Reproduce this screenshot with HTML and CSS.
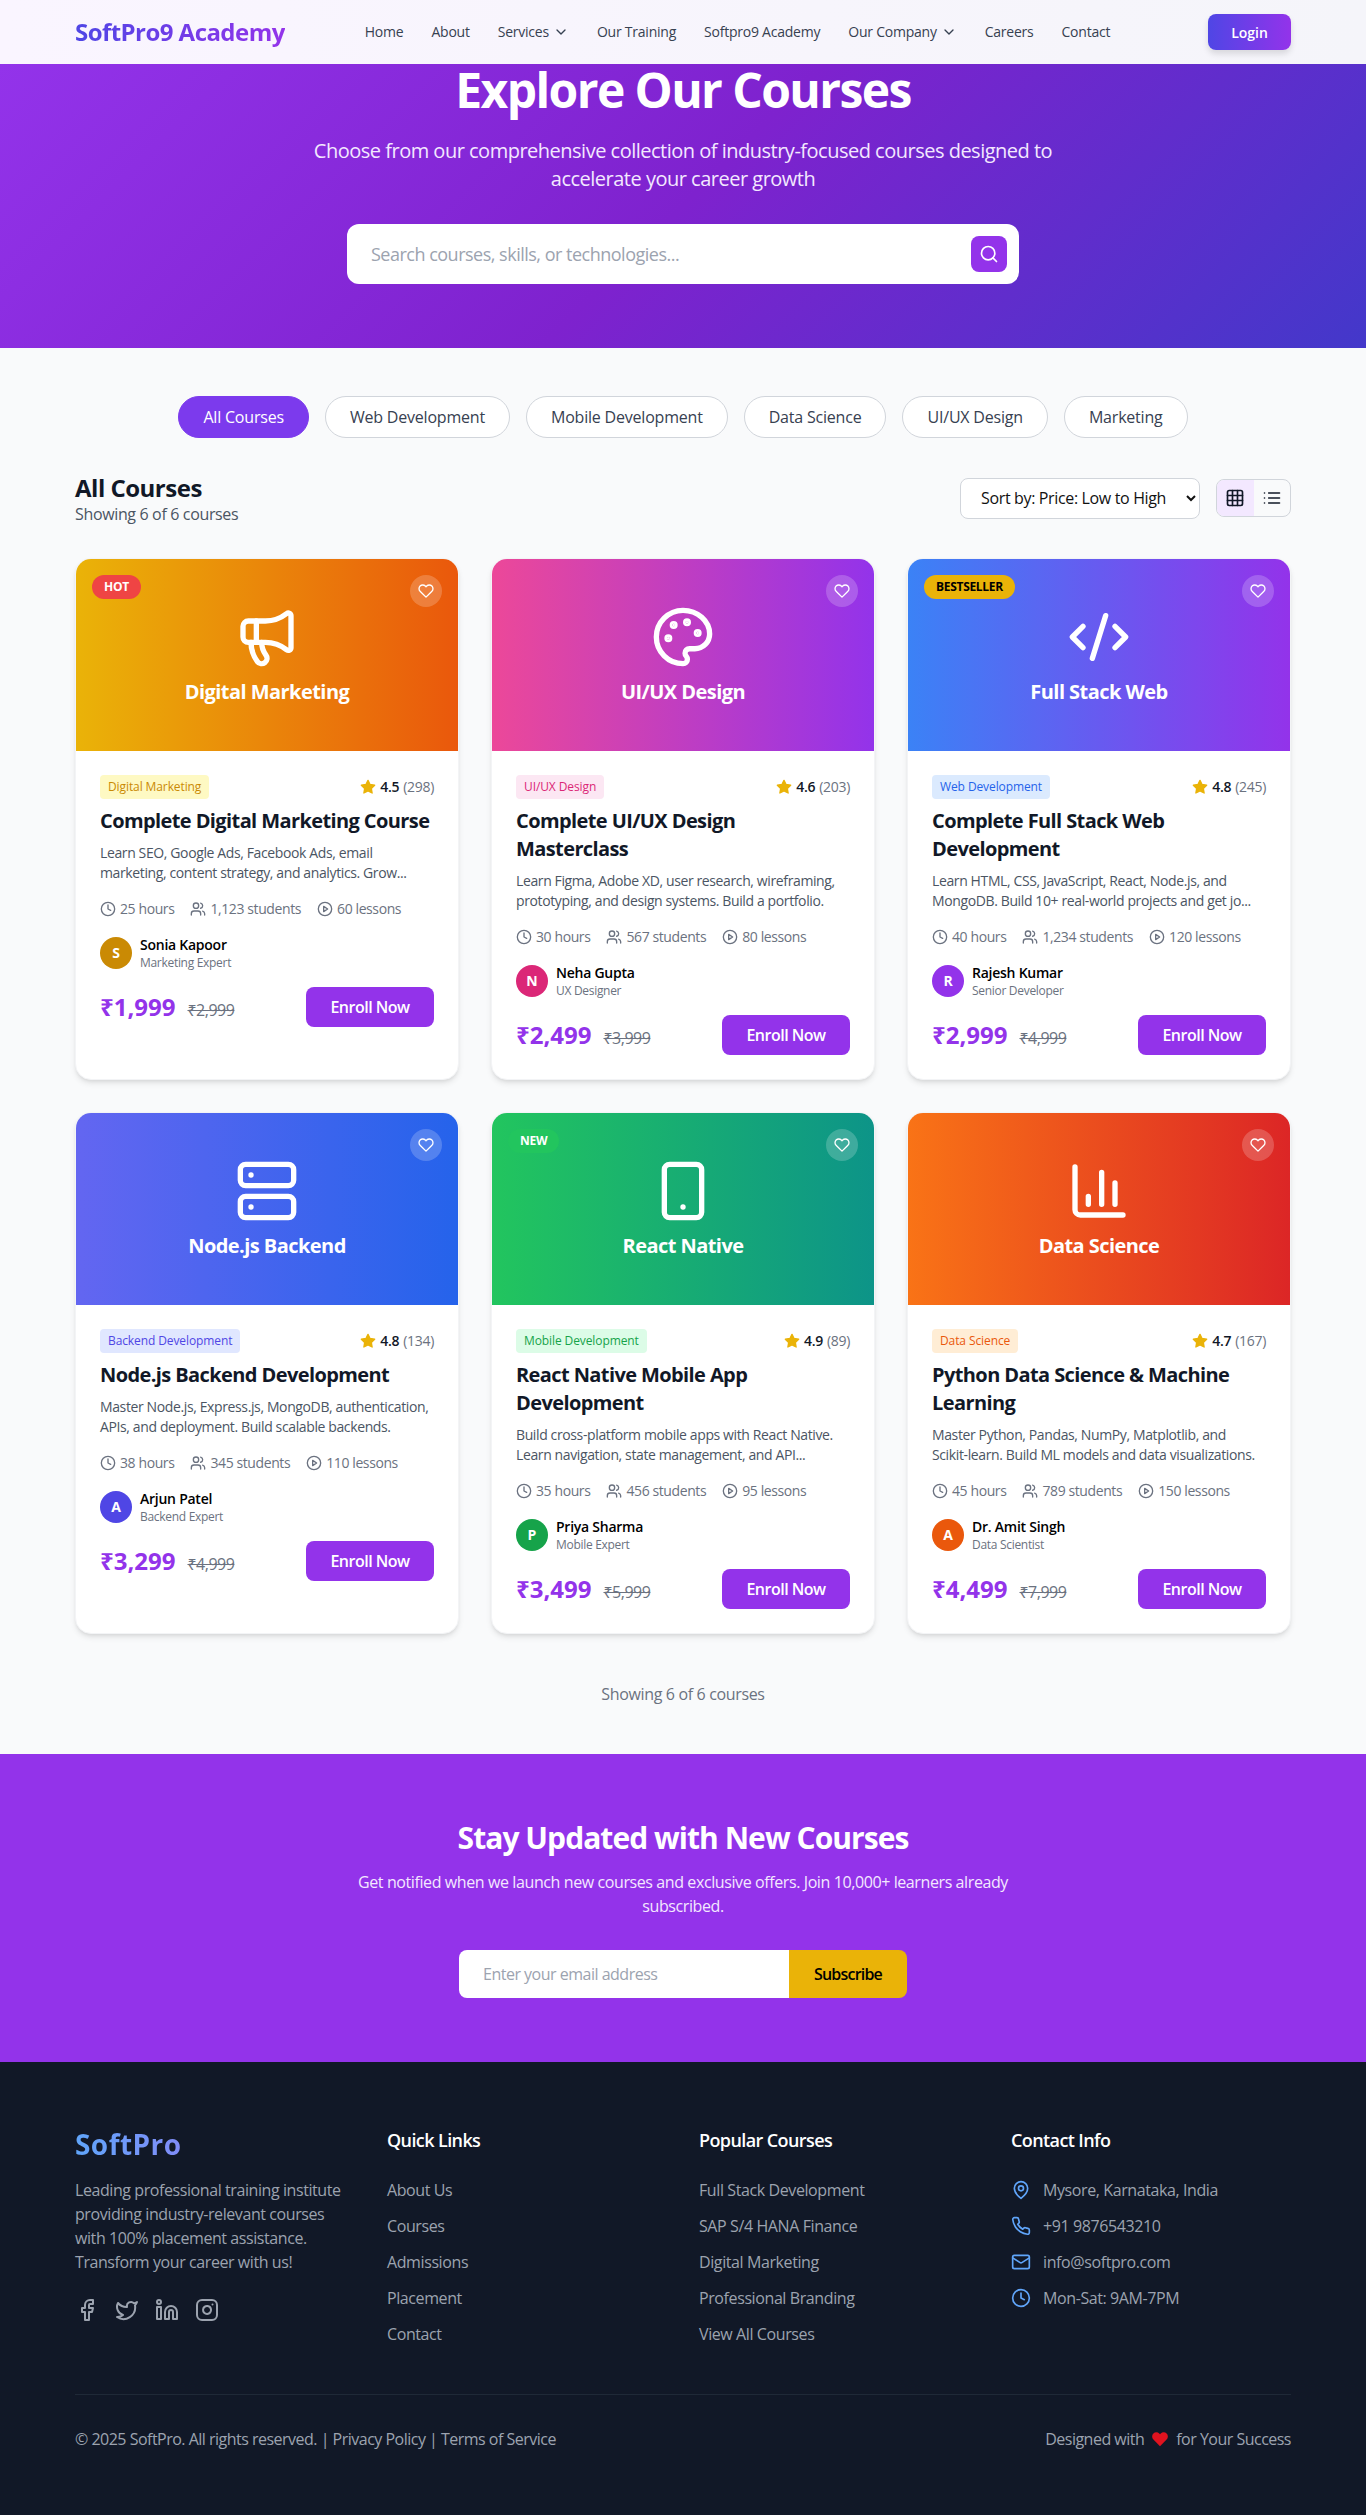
FILE: index.html
```html
<!DOCTYPE html>
<html>
<head>
<meta charset="UTF-8">
<title>Courses - SoftPro9 Academy</title>
<link rel="stylesheet" href="styles.css">
</head>
<body>
<svg class="sprite" xmlns="http://www.w3.org/2000/svg">
  <symbol id="i-chevron" viewBox="0 0 24 24"><path d="m6 9 6 6 6-6"/></symbol>
  <symbol id="i-search" viewBox="0 0 24 24"><circle cx="11" cy="11" r="8"/><path d="m21 21-4.3-4.3"/></symbol>
  <symbol id="i-heart" viewBox="0 0 24 24"><path d="M20.84 4.61a5.5 5.5 0 0 0-7.78 0L12 5.67l-1.06-1.06a5.5 5.5 0 0 0-7.78 7.78l1.06 1.06L12 21.23l7.78-7.78 1.06-1.06a5.5 5.5 0 0 0 0-7.78z"/></symbol>
  <symbol id="i-star" viewBox="0 0 24 24"><polygon points="12 2 15.09 8.26 22 9.27 17 14.14 18.18 21.02 12 17.77 5.82 21.02 7 14.14 2 9.27 8.91 8.26 12 2"/></symbol>
  <symbol id="i-clock" viewBox="0 0 24 24"><circle cx="12" cy="12" r="10"/><path d="M12 6v6l4 2"/></symbol>
  <symbol id="i-users" viewBox="0 0 24 24"><path d="M16 21v-2a4 4 0 0 0-4-4H6a4 4 0 0 0-4 4v2"/><circle cx="9" cy="7" r="4"/><path d="M22 21v-2a4 4 0 0 0-3-3.87"/><path d="M16 3.13a4 4 0 0 1 0 7.75"/></symbol>
  <symbol id="i-play" viewBox="0 0 24 24"><circle cx="12" cy="12" r="10"/><polygon points="10 8 16 12 10 16 10 8"/></symbol>
  <symbol id="i-grid" viewBox="0 0 24 24"><rect x="3" y="3" width="18" height="18" rx="2"/><path d="M3 9h18M3 15h18M9 3v18M15 3v18"/></symbol>
  <symbol id="i-list" viewBox="0 0 24 24"><path d="M8 6h13M8 12h13M8 18h13M3 6h.01M3 12h.01M3 18h.01"/></symbol>
  <symbol id="i-megaphone" viewBox="0 0 24 24"><path d="M11 6a13 13 0 0 0 8.4-2.8A1 1 0 0 1 21 4v12a1 1 0 0 1-1.6.8A13 13 0 0 0 11 14H5a2 2 0 0 1-2-2V8a2 2 0 0 1 2-2z"/><path d="M6 14a12 12 0 0 0 2.4 7.2 2 2 0 0 0 3.2-2.4A8 8 0 0 1 10 14"/><path d="M8 6v8"/></symbol>
  <symbol id="i-palette" viewBox="0 0 24 24"><path d="M12 2C6.5 2 2 6.5 2 12s4.5 10 10 10c.926 0 1.648-.746 1.648-1.688 0-.437-.18-.835-.437-1.125-.29-.289-.438-.652-.438-1.125a1.64 1.64 0 0 1 1.668-1.668h1.996c3.051 0 5.555-2.503 5.555-5.554C21.965 6.012 17.461 2 12 2z"/><circle fill="currentColor" cx="13.5" cy="6.5" r=".5"/><circle fill="currentColor" cx="17.5" cy="10.5" r=".5"/><circle fill="currentColor" cx="8.5" cy="7.5" r=".5"/><circle fill="currentColor" cx="6.5" cy="12.5" r=".5"/></symbol>
  <symbol id="i-code" viewBox="0 0 24 24"><path d="m18 16 4-4-4-4M6 8l-4 4 4 4M14.5 4l-5 16"/></symbol>
  <symbol id="i-server" viewBox="0 0 24 24"><rect x="2" y="2" width="20" height="8" rx="2"/><rect x="2" y="14" width="20" height="8" rx="2"/><path d="M6 6h.01M6 18h.01"/></symbol>
  <symbol id="i-phone-device" viewBox="0 0 24 24"><rect x="5" y="2" width="14" height="20" rx="2"/><path d="M12 18h.01"/></symbol>
  <symbol id="i-chart" viewBox="0 0 24 24"><path d="M3 3v16a2 2 0 0 0 2 2h16"/><path d="M18 17V9M13 17V5M8 17v-3"/></symbol>
  <symbol id="i-facebook" viewBox="0 0 24 24"><path d="M18 2h-3a5 5 0 0 0-5 5v3H7v4h3v8h4v-8h3l1-4h-4V7a1 1 0 0 1 1-1h3z"/></symbol>
  <symbol id="i-twitter" viewBox="0 0 24 24"><path d="M22 4s-.7 2.1-2 3.4c1.6 10-9.4 17.3-18 11.6 2.2.1 4.4-.6 6-2C3 15.5.5 9.6 3 5c2.2 2.6 5.6 4.1 9 4-.9-4.2 4-6.6 7-3.8 1.1 0 3-1.2 3-1.2z"/></symbol>
  <symbol id="i-linkedin" viewBox="0 0 24 24"><path d="M16 8a6 6 0 0 1 6 6v7h-4v-7a2 2 0 0 0-2-2 2 2 0 0 0-2 2v7h-4v-7a6 6 0 0 1 6-6z"/><rect x="2" y="9" width="4" height="12"/><circle cx="4" cy="4" r="2"/></symbol>
  <symbol id="i-instagram" viewBox="0 0 24 24"><rect x="2" y="2" width="20" height="20" rx="5"/><path d="M16 11.37A4 4 0 1 1 12.63 8 4 4 0 0 1 16 11.37z"/><path d="M17.5 6.5h.01"/></symbol>
  <symbol id="i-pin" viewBox="0 0 24 24"><path d="M20 10c0 6-8 12-8 12s-8-6-8-12a8 8 0 0 1 16 0Z"/><circle cx="12" cy="10" r="3"/></symbol>
  <symbol id="i-phone" viewBox="0 0 24 24"><path d="M22 16.92v3a2 2 0 0 1-2.18 2 19.79 19.79 0 0 1-8.63-3.07 19.5 19.5 0 0 1-6-6 19.79 19.79 0 0 1-3.07-8.67A2 2 0 0 1 4.11 2h3a2 2 0 0 1 2 1.72 12.84 12.84 0 0 0 .7 2.81 2 2 0 0 1-.45 2.11L8.09 9.91a16 16 0 0 0 6 6l1.27-1.27a2 2 0 0 1 2.11-.45 12.84 12.84 0 0 0 2.81.7A2 2 0 0 1 22 16.92z"/></symbol>
  <symbol id="i-mail" viewBox="0 0 24 24"><rect x="2" y="4" width="20" height="16" rx="2"/><path d="m22 7-8.97 5.7a1.94 1.94 0 0 1-2.06 0L2 7"/></symbol>
</svg>

<nav class="nav">
  <a class="nav-logo">SoftPro9 Academy</a>
  <ul class="nav-links">
    <li>Home</li>
    <li>About</li>
    <li>Services <svg class="ico ico-16"><use href="#i-chevron"/></svg></li>
    <li>Our Training</li>
    <li>Softpro9 Academy</li>
    <li>Our Company <svg class="ico ico-16"><use href="#i-chevron"/></svg></li>
    <li>Careers</li>
    <li>Contact</li>
  </ul>
  <button class="login">Login</button>
</nav>

<section class="hero">
  <h1>Explore Our Courses</h1>
  <p>Choose from our comprehensive collection of industry-focused courses designed to accelerate your career growth</p>
  <div class="search">
    <input type="text" placeholder="Search courses, skills, or technologies...">
    <button><svg class="ico ico-20"><use href="#i-search"/></svg></button>
  </div>
</section>

<main class="main">
  <div class="filters">
    <button class="pill active">All Courses</button>
    <button class="pill">Web Development</button>
    <button class="pill">Mobile Development</button>
    <button class="pill">Data Science</button>
    <button class="pill">UI/UX Design</button>
    <button class="pill">Marketing</button>
  </div>

  <div class="list-head">
    <div>
      <h2>All Courses</h2>
      <p>Showing 6 of 6 courses</p>
    </div>
    <div class="list-tools">
      <select class="sort">
        <option>Sort by: Price: Low to High</option>
        <option>Sort by: Price: High to Low</option>
        <option>Sort by: Rating</option>
      </select>
      <div class="view">
        <button class="active"><svg class="ico ico-20"><use href="#i-grid"/></svg></button>
        <button><svg class="ico ico-20"><use href="#i-list"/></svg></button>
      </div>
    </div>
  </div>

  <div class="cards">
    <article class="card">
      <div class="thumb g-marketing">
        <span class="badge badge-hot">HOT</span>
        <span class="like"><svg class="ico ico-16"><use href="#i-heart"/></svg></span>
        <svg class="ico ico-64"><use href="#i-megaphone"/></svg>
        <h3>Digital Marketing</h3>
      </div>
      <div class="card-body">
        <div class="card-top">
          <span class="tag t-marketing">Digital Marketing</span>
          <span class="rating"><svg class="star"><use href="#i-star"/></svg><b>4.5</b> <span>(298)</span></span>
        </div>
        <h4>Complete Digital Marketing Course</h4>
        <p class="desc">Learn SEO, Google Ads, Facebook Ads, email marketing, content strategy, and analytics. Grow...</p>
        <div class="meta">
          <span><svg class="ico ico-16"><use href="#i-clock"/></svg>25 hours</span>
          <span><svg class="ico ico-16"><use href="#i-users"/></svg>1,123 students</span>
          <span><svg class="ico ico-16"><use href="#i-play"/></svg>60 lessons</span>
        </div>
        <div class="teacher">
          <span class="avatar a-yellow">S</span>
          <div><strong>Sonia Kapoor</strong><small>Marketing Expert</small></div>
        </div>
        <div class="buy">
          <div><span class="price">₹1,999</span><s class="old">₹2,999</s></div>
          <button class="enroll">Enroll Now</button>
        </div>
      </div>
    </article>

    <article class="card">
      <div class="thumb g-design">
        <span class="like"><svg class="ico ico-16"><use href="#i-heart"/></svg></span>
        <svg class="ico ico-64"><use href="#i-palette"/></svg>
        <h3>UI/UX Design</h3>
      </div>
      <div class="card-body">
        <div class="card-top">
          <span class="tag t-design">UI/UX Design</span>
          <span class="rating"><svg class="star"><use href="#i-star"/></svg><b>4.6</b> <span>(203)</span></span>
        </div>
        <h4>Complete UI/UX Design Masterclass</h4>
        <p class="desc">Learn Figma, Adobe XD, user research, wireframing, prototyping, and design systems. Build a portfolio.</p>
        <div class="meta">
          <span><svg class="ico ico-16"><use href="#i-clock"/></svg>30 hours</span>
          <span><svg class="ico ico-16"><use href="#i-users"/></svg>567 students</span>
          <span><svg class="ico ico-16"><use href="#i-play"/></svg>80 lessons</span>
        </div>
        <div class="teacher">
          <span class="avatar a-pink">N</span>
          <div><strong>Neha Gupta</strong><small>UX Designer</small></div>
        </div>
        <div class="buy">
          <div><span class="price">₹2,499</span><s class="old">₹3,999</s></div>
          <button class="enroll">Enroll Now</button>
        </div>
      </div>
    </article>

    <article class="card">
      <div class="thumb g-web">
        <span class="badge badge-best">BESTSELLER</span>
        <span class="like"><svg class="ico ico-16"><use href="#i-heart"/></svg></span>
        <svg class="ico ico-64"><use href="#i-code"/></svg>
        <h3>Full Stack Web</h3>
      </div>
      <div class="card-body">
        <div class="card-top">
          <span class="tag t-web">Web Development</span>
          <span class="rating"><svg class="star"><use href="#i-star"/></svg><b>4.8</b> <span>(245)</span></span>
        </div>
        <h4>Complete Full Stack Web Development</h4>
        <p class="desc">Learn HTML, CSS, JavaScript, React, Node.js, and MongoDB. Build 10+ real-world projects and get jo...</p>
        <div class="meta">
          <span><svg class="ico ico-16"><use href="#i-clock"/></svg>40 hours</span>
          <span><svg class="ico ico-16"><use href="#i-users"/></svg>1,234 students</span>
          <span><svg class="ico ico-16"><use href="#i-play"/></svg>120 lessons</span>
        </div>
        <div class="teacher">
          <span class="avatar a-purple">R</span>
          <div><strong>Rajesh Kumar</strong><small>Senior Developer</small></div>
        </div>
        <div class="buy">
          <div><span class="price">₹2,999</span><s class="old">₹4,999</s></div>
          <button class="enroll">Enroll Now</button>
        </div>
      </div>
    </article>

    <article class="card">
      <div class="thumb g-node">
        <span class="like"><svg class="ico ico-16"><use href="#i-heart"/></svg></span>
        <svg class="ico ico-64"><use href="#i-server"/></svg>
        <h3>Node.js Backend</h3>
      </div>
      <div class="card-body">
        <div class="card-top">
          <span class="tag t-node">Backend Development</span>
          <span class="rating"><svg class="star"><use href="#i-star"/></svg><b>4.8</b> <span>(134)</span></span>
        </div>
        <h4>Node.js Backend Development</h4>
        <p class="desc">Master Node.js, Express.js, MongoDB, authentication, APIs, and deployment. Build scalable backends.</p>
        <div class="meta">
          <span><svg class="ico ico-16"><use href="#i-clock"/></svg>38 hours</span>
          <span><svg class="ico ico-16"><use href="#i-users"/></svg>345 students</span>
          <span><svg class="ico ico-16"><use href="#i-play"/></svg>110 lessons</span>
        </div>
        <div class="teacher">
          <span class="avatar a-indigo">A</span>
          <div><strong>Arjun Patel</strong><small>Backend Expert</small></div>
        </div>
        <div class="buy">
          <div><span class="price">₹3,299</span><s class="old">₹4,999</s></div>
          <button class="enroll">Enroll Now</button>
        </div>
      </div>
    </article>

    <article class="card">
      <div class="thumb g-mobile">
        <span class="badge badge-new">NEW</span>
        <span class="like"><svg class="ico ico-16"><use href="#i-heart"/></svg></span>
        <svg class="ico ico-64"><use href="#i-phone-device"/></svg>
        <h3>React Native</h3>
      </div>
      <div class="card-body">
        <div class="card-top">
          <span class="tag t-mobile">Mobile Development</span>
          <span class="rating"><svg class="star"><use href="#i-star"/></svg><b>4.9</b> <span>(89)</span></span>
        </div>
        <h4>React Native Mobile App Development</h4>
        <p class="desc">Build cross-platform mobile apps with React Native. Learn navigation, state management, and API...</p>
        <div class="meta">
          <span><svg class="ico ico-16"><use href="#i-clock"/></svg>35 hours</span>
          <span><svg class="ico ico-16"><use href="#i-users"/></svg>456 students</span>
          <span><svg class="ico ico-16"><use href="#i-play"/></svg>95 lessons</span>
        </div>
        <div class="teacher">
          <span class="avatar a-green">P</span>
          <div><strong>Priya Sharma</strong><small>Mobile Expert</small></div>
        </div>
        <div class="buy">
          <div><span class="price">₹3,499</span><s class="old">₹5,999</s></div>
          <button class="enroll">Enroll Now</button>
        </div>
      </div>
    </article>

    <article class="card">
      <div class="thumb g-data">
        <span class="like"><svg class="ico ico-16"><use href="#i-heart"/></svg></span>
        <svg class="ico ico-64"><use href="#i-chart"/></svg>
        <h3>Data Science</h3>
      </div>
      <div class="card-body">
        <div class="card-top">
          <span class="tag t-data">Data Science</span>
          <span class="rating"><svg class="star"><use href="#i-star"/></svg><b>4.7</b> <span>(167)</span></span>
        </div>
        <h4>Python Data Science &amp; Machine Learning</h4>
        <p class="desc">Master Python, Pandas, NumPy, Matplotlib, and<br>Scikit-learn. Build ML models and data visualizations.</p>
        <div class="meta">
          <span><svg class="ico ico-16"><use href="#i-clock"/></svg>45 hours</span>
          <span><svg class="ico ico-16"><use href="#i-users"/></svg>789 students</span>
          <span><svg class="ico ico-16"><use href="#i-play"/></svg>150 lessons</span>
        </div>
        <div class="teacher">
          <span class="avatar a-orange">A</span>
          <div><strong>Dr. Amit Singh</strong><small>Data Scientist</small></div>
        </div>
        <div class="buy">
          <div><span class="price">₹4,499</span><s class="old">₹7,999</s></div>
          <button class="enroll">Enroll Now</button>
        </div>
      </div>
    </article>
  </div>

  <p class="count">Showing 6 of 6 courses</p>
</main>

<section class="news">
  <h2>Stay Updated with New Courses</h2>
  <p>Get notified when we launch new courses and exclusive offers. Join 10,000+ learners already subscribed.</p>
  <form class="news-form">
    <input type="email" placeholder="Enter your email address">
    <button type="button">Subscribe</button>
  </form>
</section>

<footer class="footer">
  <div class="foot-grid">
    <div>
      <div class="foot-logo">SoftPro</div>
      <p class="foot-about">Leading professional training institute providing industry-relevant courses with 100% placement assistance. Transform your career with us!</p>
      <div class="social">
        <svg class="ico ico-24"><use href="#i-facebook"/></svg>
        <svg class="ico ico-24"><use href="#i-twitter"/></svg>
        <svg class="ico ico-24"><use href="#i-linkedin"/></svg>
        <svg class="ico ico-24"><use href="#i-instagram"/></svg>
      </div>
    </div>
    <div>
      <h4>Quick Links</h4>
      <ul>
        <li>About Us</li>
        <li>Courses</li>
        <li>Admissions</li>
        <li>Placement</li>
        <li>Contact</li>
      </ul>
    </div>
    <div>
      <h4>Popular Courses</h4>
      <ul>
        <li>Full Stack Development</li>
        <li>SAP S/4 HANA Finance</li>
        <li>Digital Marketing</li>
        <li>Professional Branding</li>
        <li>View All Courses</li>
      </ul>
    </div>
    <div>
      <h4>Contact Info</h4>
      <ul class="contact">
        <li><svg class="ico ico-20"><use href="#i-pin"/></svg>Mysore, Karnataka, India</li>
        <li><svg class="ico ico-20"><use href="#i-phone"/></svg>+91 9876543210</li>
        <li><svg class="ico ico-20"><use href="#i-mail"/></svg>info@softpro.com</li>
        <li><svg class="ico ico-20"><use href="#i-clock"/></svg>Mon-Sat: 9AM-7PM</li>
      </ul>
    </div>
  </div>
  <div class="foot-bottom">
    <span>© 2025 SoftPro. All rights reserved. | Privacy Policy | Terms of Service</span>
    <span class="made">Designed with <svg class="red-heart" viewBox="0 0 24 24"><path d="M12 21.5 3.2 12.6a5.6 5.6 0 0 1 0-8 5.5 5.5 0 0 1 7.8 0l1 1 1-1a5.5 5.5 0 0 1 7.8 0 5.6 5.6 0 0 1 0 8z"/></svg> for Your Success</span>
  </div>
</footer>
</body>
</html>
```

FILE: styles.css
```css
*{
    box-sizing: border-box;
    margin: 0;
    padding: 0;
}
body{
    font-family: "Open Sans", "Noto Sans", sans-serif;
    font-size: 16px;
    line-height: 24px;
    color: #111827;
    background: #f9fafb;
}
ul{
    list-style: none;
}
button, input, select{
    font-family: inherit;
}
.sprite{
    display: none;
}
.ico{
    fill: none;
    stroke: currentColor;
    stroke-width: 2;
    stroke-linecap: round;
    stroke-linejoin: round;
    flex: none;
}
.ico-16{ width: 16px; height: 16px; }
.ico-20{ width: 20px; height: 20px; }
.ico-24{ width: 24px; height: 24px; }
.ico-64{ width: 64px; height: 64px; }

/* nav */
.nav{
    height: 64px;
    padding: 0 75px;
    display: flex;
    align-items: center;
    background: linear-gradient(90deg, #faf5ff, #f5f5fa);
}
.nav-logo{
    font-size: 24px;
    font-weight: 700;
    line-height: 32px;
    letter-spacing: -0.55px;
    background: linear-gradient(90deg, #4f46e5, #9333ea);
    -webkit-background-clip: text;
    background-clip: text;
    color: transparent;
}
.nav-links{
    display: flex;
    gap: 28px;
    margin-left: 80px;
    font-size: 14px;
    font-weight: 500;
    letter-spacing: -0.23px;
    color: #374151;
}
.nav-links li{
    display: flex;
    align-items: center;
    gap: 4px;
}
.login{
    margin-left: auto;
    width: 83px;
    height: 36px;
    border: 0;
    border-radius: 8px;
    background: linear-gradient(90deg, #4f46e5, #9333ea);
    color: #fff;
    font-size: 14px;
    font-weight: 600;
    box-shadow: 0 4px 6px rgba(0,0,0,.12);
}

/* hero */
.hero{
    height: 284px;
    padding-top: 2px;
    text-align: center;
    color: #fff;
    background: linear-gradient(135deg, #9333ea, #7e22ce 50%, #4338ca 100%);
}
.hero h1{
    font-size: 48px;
    line-height: 48px;
    font-weight: 700;
    letter-spacing: -1.6px;
    margin-bottom: 23px;
}
.hero p{
    max-width: 768px;
    margin: 0 auto 31px;
    font-size: 20px;
    line-height: 28px;
    letter-spacing: -0.5px;
    color: #f3e8ff;
}
.search{
    width: 672px;
    height: 60px;
    margin: 0 auto;
    padding: 12px;
    display: flex;
    align-items: center;
    background: #fff;
    border-radius: 12px;
}
.search input{
    flex: 1;
    border: 0;
    outline: 0;
    padding-left: 12px;
    font-size: 18px;
    letter-spacing: -0.5px;
}
.search input::placeholder,
.news-form input::placeholder{
    color: #9ca3af;
}
.search button{
    width: 36px;
    height: 36px;
    border: 0;
    border-radius: 8px;
    background: #9333ea;
    color: #fff;
    display: flex;
    align-items: center;
    justify-content: center;
}

/* course list */
.main{
    padding: 48px 75px;
}
.filters{
    display: flex;
    justify-content: center;
    gap: 16px;
    margin-bottom: 34px;
}
.pill{
    height: 42px;
    padding: 0 24px;
    border: 1px solid #d1d5db;
    border-radius: 21px;
    background: #fff;
    color: #374151;
    font-size: 16px;
    font-weight: 500;
    letter-spacing: -0.2px;
}
.pill.active{
    background: #7c3aed;
    border-color: #7c3aed;
    color: #fff;
}
.list-head{
    display: flex;
    align-items: center;
    justify-content: space-between;
    margin-bottom: 34px;
}
.list-head h2{
    font-size: 24px;
    line-height: 32px;
    font-weight: 700;
    letter-spacing: -0.5px;
}
.list-head p{
    font-size: 16px;
    line-height: 20px;
    letter-spacing: -0.35px;
    color: #4b5563;
}
.list-tools{
    display: flex;
    align-items: center;
    gap: 16px;
}
.sort{
    width: 240px;
    height: 41px;
    padding: 0 16px;
    border: 1px solid #d1d5db;
    border-radius: 8px;
    background: #fff;
    font-size: 16px;
    letter-spacing: -0.35px;
    color: #111;
}
.view{
    display: flex;
    width: 75px;
    height: 38px;
    border: 1px solid #d1d5db;
    border-radius: 8px;
    overflow: hidden;
}
.view button{
    flex: 1;
    border: 0;
    background: transparent;
    color: #111827;
    display: flex;
    align-items: center;
    justify-content: center;
}
.view button.active{
    background: #f3e8ff;
}
.cards{
    display: grid;
    grid-template-columns: repeat(3, 1fr);
    gap: 32px;
}
.card{
    background: #fff;
    border: 1px solid #f3f4f6;
    border-radius: 16px;
    overflow: hidden;
    box-shadow: 0 4px 6px -1px rgba(0,0,0,.1), 0 2px 4px -2px rgba(0,0,0,.1);
}
.thumb{
    position: relative;
    height: 192px;
    padding-top: 1px;
    display: flex;
    flex-direction: column;
    align-items: center;
    justify-content: center;
    gap: 9px;
    color: #fff;
}
.thumb h3{
    font-size: 20px;
    line-height: 28px;
    font-weight: 700;
    letter-spacing: -0.55px;
}
.g-marketing{ background: linear-gradient(90deg, #eab308, #ea580c); }
.g-design{ background: linear-gradient(90deg, #ec4899, #9333ea); }
.g-web{ background: linear-gradient(90deg, #3b82f6, #9333ea); }
.g-node{ background: linear-gradient(90deg, #6366f1, #2563eb); }
.g-mobile{ background: linear-gradient(90deg, #22c55e, #0d9488); }
.g-data{ background: linear-gradient(90deg, #f97316, #dc2626); }
.badge{
    position: absolute;
    top: 16px;
    left: 16px;
    height: 24px;
    padding: 0 12px;
    border-radius: 12px;
    font-size: 12px;
    line-height: 24px;
    font-weight: 700;
    letter-spacing: -0.3px;
    color: #fff;
}
.badge-hot{ background: #ef4444; }
.badge-best{ background: #eab308; color: #000; }
.badge-new{ background: #22c55e; }
.like{
    position: absolute;
    top: 16px;
    right: 16px;
    width: 32px;
    height: 32px;
    border-radius: 50%;
    background: rgba(255,255,255,.2);
    display: flex;
    align-items: center;
    justify-content: center;
}
.card-body{
    padding: 24px;
}
.card-top{
    display: flex;
    align-items: center;
    justify-content: space-between;
    margin-bottom: 8px;
}
.tag{
    height: 24px;
    padding: 0 8px;
    border-radius: 4px;
    font-size: 12px;
    line-height: 24px;
    font-weight: 500;
    letter-spacing: -0.1px;
}
.t-marketing{ background: #fef9c3; color: #ca8a04; }
.t-design{ background: #fce7f3; color: #db2777; }
.t-web{ background: #dbeafe; color: #2563eb; }
.t-node{ background: #e0e7ff; color: #4f46e5; }
.t-mobile{ background: #dcfce7; color: #16a34a; }
.t-data{ background: #ffedd5; color: #ea580c; }
.rating{
    display: flex;
    align-items: center;
    gap: 4px;
    font-size: 14px;
    line-height: 20px;
    letter-spacing: -0.3px;
}
.rating b{
    font-weight: 600;
}
.rating span{
    color: #6b7280;
}
.star{
    width: 16px;
    height: 16px;
    fill: #eab308;
    stroke: #eab308;
    stroke-width: 2;
    stroke-linejoin: round;
}
.card h4{
    font-size: 20px;
    line-height: 28px;
    font-weight: 700;
    letter-spacing: -0.6px;
    margin-bottom: 8px;
}
.desc{
    font-size: 14px;
    line-height: 20px;
    letter-spacing: -0.38px;
    color: #4b5563;
    margin-bottom: 16px;
}
.meta{
    display: flex;
    gap: 16px;
    font-size: 14px;
    line-height: 20px;
    letter-spacing: -0.4px;
    color: #6b7280;
    margin-bottom: 16px;
}
.meta span{
    display: flex;
    align-items: center;
    gap: 4px;
}
.teacher{
    display: flex;
    align-items: center;
    gap: 8px;
    height: 36px;
    margin-bottom: 16px;
}
.avatar{
    width: 32px;
    height: 32px;
    border-radius: 50%;
    display: flex;
    align-items: center;
    justify-content: center;
    font-size: 14px;
    font-weight: 700;
    color: #fff;
}
.a-yellow{ background: #ca8a04; }
.a-pink{ background: #db2777; }
.a-purple{ background: #9333ea; }
.a-indigo{ background: #4f46e5; }
.a-green{ background: #16a34a; }
.a-orange{ background: #ea580c; }
.teacher strong{
    display: block;
    font-size: 14px;
    line-height: 20px;
    font-weight: 600;
    letter-spacing: -0.25px;
    color: #000;
}
.teacher small{
    display: block;
    font-size: 12px;
    line-height: 16px;
    letter-spacing: -0.3px;
    color: #6b7280;
}
.buy{
    display: flex;
    align-items: center;
    justify-content: space-between;
}
.price{
    font-size: 24px;
    line-height: 32px;
    font-weight: 700;
    color: #9333ea;
}
.old{
    margin-left: 12px;
    font-size: 16px;
    letter-spacing: -0.5px;
    color: #6b7280;
}
.enroll{
    width: 128px;
    height: 40px;
    border: 0;
    border-radius: 8px;
    background: #9333ea;
    color: #fff;
    font-size: 16px;
    font-weight: 600;
    letter-spacing: -0.5px;
}
.count{
    margin-top: 48px;
    text-align: center;
    color: #6b7280;
    font-size: 16px;
    letter-spacing: -0.35px;
}

/* newsletter */
.news{
    height: 308px;
    padding-top: 64px;
    text-align: center;
    color: #fff;
    background: #9333ea;
}
.news h2{
    font-size: 30px;
    line-height: 40px;
    font-weight: 700;
    letter-spacing: -0.95px;
    margin-bottom: 12px;
}
.news p{
    width: 672px;
    margin: 0 auto 32px;
    letter-spacing: -0.4px;
    color: #f3e8ff;
}
.news-form{
    display: flex;
    width: 448px;
    height: 48px;
    margin: 0 auto;
    border-radius: 8px;
    overflow: hidden;
}
.news-form input{
    flex: 1;
    min-width: 0;
    border: 0;
    outline: 0;
    padding: 0 24px;
    font-size: 16px;
    letter-spacing: -0.5px;
}
.news-form button{
    width: 118px;
    border: 0;
    background: #eab308;
    color: #000;
    font-size: 16px;
    font-weight: 600;
    letter-spacing: -0.8px;
}

/* footer */
.footer{
    padding: 64px 75px 75px;
    background: #111827;
    color: #9ca3af;
}
.foot-grid{
    display: grid;
    grid-template-columns: repeat(4, 1fr);
    gap: 32px;
    margin-bottom: 36px;
}
.foot-logo{
    font-size: 28px;
    line-height: 36px;
    font-weight: 700;
    letter-spacing: 0.45px;
    margin-bottom: 16px;
    background: linear-gradient(90deg, #60a5fa, #818cf8);
    -webkit-background-clip: text;
    background-clip: text;
    color: transparent;
    width: max-content;
}
.foot-about{
    letter-spacing: -0.42px;
    margin-bottom: 24px;
}
.social{
    display: flex;
    gap: 16px;
}
.footer h4{
    font-size: 18px;
    line-height: 28px;
    font-weight: 600;
    letter-spacing: -0.6px;
    color: #fff;
    margin-bottom: 24px;
}
.footer li{
    margin-bottom: 12px;
    letter-spacing: -0.4px;
}
.contact li{
    display: flex;
    align-items: center;
    gap: 12px;
}
.contact .ico{
    color: #60a5fa;
}
.foot-bottom{
    display: flex;
    justify-content: space-between;
    padding-top: 32px;
    border-top: 1px solid #1f2937;
    letter-spacing: -0.51px;
}
.made{
    display: flex;
    align-items: center;
    gap: 7px;
}
.red-heart{
    width: 18px;
    height: 18px;
    fill: #e0131f;
}
```
